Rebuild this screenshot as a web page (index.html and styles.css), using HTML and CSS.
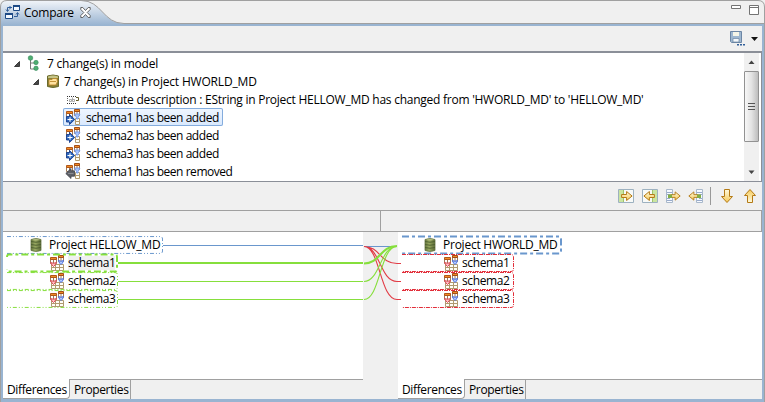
FILE: index.html
```html
<!DOCTYPE html>
<html lang="en">
<head>
<meta charset="utf-8">
<title>Compare</title>
<link rel="stylesheet" href="styles.css">
</head>
<body>
<svg class="defs" aria-hidden="true">
  <defs>
    <linearGradient id="gold" x2="0" y2="1"><stop stop-color="#fffbe0"/><stop offset="1" stop-color="#f5c957"/></linearGradient>
    <linearGradient id="tabfill" gradientUnits="userSpaceOnUse" x1="0" y1="0" x2="0" y2="25"><stop stop-color="#f3f6fa"/><stop offset="1" stop-color="#99b4d1"/></linearGradient>
    <linearGradient id="olive"><stop stop-color="#66763f"/><stop offset=".4" stop-color="#9aab62"/><stop offset="1" stop-color="#5c6b38"/></linearGradient>
    <symbol id="expand" viewBox="0 0 6 6"><path d="M5.500 .5v5h-5z" fill="#484848" stroke="#222" stroke-width=".8"/></symbol>
    <symbol id="model" viewBox="0 0 16 16"><path d="M4.500 3v11H9M4.500 8H9" fill="none" stroke="#777"/><circle cx="4.500" cy="3" r="2.300" fill="#4faf72" stroke="#34885a" stroke-width=".6"/><circle cx="10" cy="7.500" r="2.200" fill="#4faf72" stroke="#34885a" stroke-width=".6"/><circle cx="10" cy="13.300" r="2.200" fill="#4faf72" stroke="#34885a" stroke-width=".6"/></symbol>
    <symbol id="project" viewBox="0 0 16 16"><path d="M2.500 3Q8 1 13.500 3v10.500Q8 15.500 2.500 13.500z" fill="#87813a" stroke="#6b6a2c"/><path d="M3 3.500q5-2 10 0V5H3z" fill="#c5c487"/><path d="M4 12V6.500h3l1-1h4v2h1l-2 4.500z" fill="#ffe2a0" stroke="#b88222" stroke-width=".8"/><path d="M5 8.500h6" stroke="#b88222" stroke-width=".8"/></symbol>
    <symbol id="db" viewBox="0 0 16 16"><path d="M3 2.500Q8 .5 13 2.500v11Q8 15.500 3 13.500z" fill="url(#olive)" stroke="#647441" stroke-width=".8"/><path d="M3 4.500q5 1.500 10 0M3 7.500q5 1.500 10 0M3 10.500q5 1.500 10 0" fill="none" stroke="#4b5c2e" stroke-width=".9"/><path d="M4 2.800q4-1.400 8 0-4 1.200-8 0" fill="#b3bd83"/></symbol>
    <symbol id="attr" viewBox="0 0 16 16"><path d="M2 5.500h10M2 12.500h10" stroke="#333" stroke-dasharray="1 1"/><path d="M2.500 7v4" stroke="#666" stroke-dasharray="1 1"/><path d="M4.500 8.500h2v2h-2zM7.500 6.500v4h2v-2h-2" fill="none" stroke="#999" stroke-width=".8"/><path d="M11 6.500h2.500v3H11" fill="none" stroke="#665d2c"/></symbol>
    <symbol id="tables" viewBox="0 0 16 16"><path d="M1.500 3.500h6v5h-6zM4.500 4v4" fill="#fff" stroke="#a07a58"/><path d="M1.500 2.500h6v2h-6z" fill="#f08c24" stroke="#b0561a"/><path d="M9.500 1.500h5v5h-5zM12 3v3" fill="#fff" stroke="#a07a58"/><path d="M9.500 .5h5v2h-5z" fill="#f08c24" stroke="#a34d18"/></symbol>
    <symbol id="schema" viewBox="0 0 16 16"><path d="M2.500 9.500h12v6h-12zM6.500 10v5M10.500 10v5M3 12.500h11" fill="#fffef6" stroke="#b09a70"/><use href="#tables"/><path d="M1.500 7.500q3 1.500 6 0L6 10l-1.500 1.500L3 10z" fill="#ffc4c8" stroke="#d93c48" stroke-width=".9"/><path d="M9.500 5.500q2.500 1.500 5 0L13.500 8 12 9.500 10.500 8z" fill="#b5cbff" stroke="#3e67e0" stroke-width=".9"/></symbol>
    <symbol id="action" viewBox="0 0 16 16"><path d="M10.500 9.500h4v6h-4zM11 12.500h3" fill="#fffef6" stroke="#b09a70"/><use href="#tables"/><path d="M9.500 5h5.500l-2 3.500v1.500h-1.500V8.500z" fill="#a8c6ff" stroke="#6a92e8" stroke-width=".8"/></symbol>
    <symbol id="added" viewBox="0 0 16 16"><use href="#action"/><path d="M1.500 7.500h3V5.500L9.700 10.500l-5.200 5v-2.500h-3z" fill="#2c66bd" stroke="#153c8c" stroke-width=".9"/><path d="M2.500 10.500h5M5 8.200v4.600" stroke="#fff" stroke-width="1.100"/></symbol>
    <symbol id="removed" viewBox="0 0 16 16"><use href="#action"/><path d="M9.500 7.800H6V5.500L.8 10.500l5.200 5v-2.300h3.500z" fill="#5d6068" stroke="#3e4046" stroke-width=".8"/><path d="M3 10.500h5.500" stroke="#8a8c92"/></symbol>
    <symbol id="arrow" viewBox="0 0 12 10"><path d="M.6 3.500h5v-3l5.500 4.500-5.500 4.500v-3h-5z" fill="url(#gold)" stroke="#b47a16"/></symbol>
    <symbol id="copyall" viewBox="0 0 16 16"><path d="M.5 1.500h15v13H.5z" fill="#f8faf8" stroke="#9db1c0"/><path d="M1 2h4v12H1z" fill="#cbe5a0"/><path d="M5.500 2v12" stroke="#9fc36c"/><use href="#arrow" x="3" y="3" width="12" height="10"/></symbol>
    <symbol id="copyone" viewBox="0 0 16 16"><path d="M1.500 1.500h6v13h-6z" fill="#f7faff" stroke="#a8b8cb"/><path d="M2 4.500h5M2 6.500h3M2 10.500h3M2 12.500h5" stroke="#9aaccc"/><use href="#arrow" x="5" y="3" width="11" height="10"/><path d="M3 6.500h4v3.500H3z" fill="#82ad43"/></symbol>
    <symbol id="down" viewBox="0 0 14 16"><path d="M4.500 1.500h5v7h3L7 14.500 1.500 8.500h3z" fill="url(#gold)" stroke="#b47a16"/></symbol>
  </defs>
</svg>
<main class="window">
  <header class="titlebar">
    <svg class="tabshape" viewBox="0 0 765 26">
      <path d="M0 0h765v26H0z" fill="#f0f0f0"/>
      <path d="M.5 26V7Q.5 .5 7 .5H81C102 .5 103 23.500 124 23.500H765V26z" fill="url(#tabfill)"/>
      <path d="M124 24h641v2H124z" fill="#99b4d1"/>
      <path d="M.5 26V7Q.5 .5 7 .5H758Q764.500 .5 764.500 7v19M81 .5C102 .5 103 23.500 124 23.500H765" fill="none" stroke="#a0a0a0"/>
    </svg>
    <svg class="compare-icon" viewBox="0 0 16 16"><path d="M8.500 1.500h6v5h-6zM.5 9.500h7v5h-7z" fill="#f4f9ff" stroke="#1d4a86"/><path d="M8 2h7M0 10h8" stroke="#1d4a86" stroke-width="2"/><path d="M7 3.500H2.500V7M1 5.500l1.500 2L4 5.500M9 12.500h3.500V9M11 10.500l1.500-2 1.500 2M5 2v3" fill="none" stroke="#315e99"/></svg>
    <span class="tabtitle">Compare</span>
    <svg class="close" viewBox="0 0 11 11"><path d="M.8 .5h2l2.700 3 2.700-3h2v2l-3 3 3 3v2h-2l-2.700-3-2.700 3h-2v-2l3-3-3-3z" fill="#fff" stroke="#555" stroke-width=".9"/></svg>
    <svg class="winctl" viewBox="0 0 30 12"><path d="M.5 1.500h9v3h-9zM18.500 1.500h9v9h-9zM18 3.500h10" fill="#fff" stroke="#737373"/></svg>
  </header>
  <section class="body">
    <div class="toolbar top">
      <svg class="save" viewBox="0 0 16 16"><path d="M.5 1.500h11v11H1.500l-1-1z" fill="#9eb7d0" stroke="#6c86a5"/><path d="M3 2h6v4H3z" fill="#f5f5e8"/><path d="M3 8.500h6V12H3z" fill="#f4f8fb" stroke="#6c86a5" stroke-width=".7"/><path d="M7 14.800h8" stroke="#315f9a" stroke-width="1.500" stroke-dasharray="2 1"/></svg>
      <svg class="menu" viewBox="0 0 7 4"><path d="M0 0h7L3.500 4z" fill="#111"/></svg>
    </div>
    <div class="tree">
      <div class="rows">
        <div class="row l0"><svg class="tw"><use href="#expand"/></svg><svg class="ic"><use href="#model"/></svg><span class="t1">7 change(s) in model</span></div>
        <div class="row l1"><svg class="tw"><use href="#expand"/></svg><svg class="ic"><use href="#project"/></svg><span class="t2">7 change(s) in Project HWORLD_MD</span></div>
        <div class="row l2"><svg class="ic"><use href="#attr"/></svg><span class="t3">Attribute description : EString in Project HELLOW_MD has changed from 'HWORLD_MD' to 'HELLOW_MD'</span></div>
        <div class="row l2 selected"><svg class="ic"><use href="#added"/></svg><span class="t4">schema1 has been added</span></div>
        <div class="row l2"><svg class="ic"><use href="#added"/></svg><span class="t4">schema2 has been added</span></div>
        <div class="row l2"><svg class="ic"><use href="#added"/></svg><span class="t4">schema3 has been added</span></div>
        <div class="row l2"><svg class="ic"><use href="#removed"/></svg><span class="t4">schema1 has been removed</span></div>
      </div>
      <div class="scrollbar">
        <svg class="sb" viewBox="0 0 15 18"><path d="M4.500 11h6L7.500 7.500z" fill="#444"/></svg>
        <div class="thumb"><i></i><i></i><i></i></div>
        <svg class="sb end" viewBox="0 0 15 18"><path d="M4.500 7.500h6l-3 3.500z" fill="#444"/></svg>
      </div>
    </div>
    <div class="toolbar mid">
      <svg><use href="#copyall"/></svg>
      <svg class="flip"><use href="#copyall"/></svg>
      <svg><use href="#copyone"/></svg>
      <svg class="flip"><use href="#copyone"/></svg>
      <i class="sep"></i>
      <svg class="nav"><use href="#down"/></svg>
      <svg class="nav up"><use href="#down"/></svg>
    </div>
    <div class="heads"><div></div><div></div></div>
    <div class="compare">
      <section class="pane left">
        <div class="list">
          <div class="node"><div class="box root"><svg class="edge" viewBox="0 0 157 18"><path d="M0 .5H154Q156.500 .5 156.500 3V15Q156.500 17.500 154 17.500H0"/></svg><svg class="ic"><use href="#db"/></svg><span>Project HELLOW_MD</span></div><i class="wire blue"></i></div>
          <div class="node"><div class="box child add current"><svg class="edge" viewBox="0 0 112 18"><path d="M0 3Q0 .5 2 .5H109Q111 .5 111 3V15Q111 17.500 109 17.500H2Q0 17.500 0 15"/></svg><svg class="ic"><use href="#schema"/></svg><span>schema1</span></div><i class="wire green thick"></i></div>
          <div class="node"><div class="box child add"><svg class="edge" viewBox="0 0 112 18"><path d="M0 .5H109Q111.500 .5 111.500 3V15Q111.500 17.500 109 17.500H0"/></svg><svg class="ic"><use href="#schema"/></svg><span>schema2</span></div><i class="wire green"></i></div>
          <div class="node"><div class="box child add"><svg class="edge" viewBox="0 0 112 18"><path d="M0 .5H109Q111.500 .5 111.500 3V15Q111.500 17.500 109 17.500H0"/></svg><svg class="ic"><use href="#schema"/></svg><span>schema3</span></div><i class="wire green"></i></div>
        </div>
        <nav class="tabs"><span class="tab active">Differences</span><span class="tab">Properties</span></nav>
      </section>
      <svg class="links" viewBox="0 0 35 167" fill="none">
        <path d="M1 14.500H34" stroke="#6a97cd"/>
        <g stroke="#e23b45" stroke-width="1.100"><path d="M1 14.500C17 14.500 17 31.500 34 31.500H38M1 14.500C17 14.500 17 49.500 34 49.500H38M1 14.500C17 14.500 17 67.500 34 67.500H38"/></g>
        <g stroke="#86df3c" stroke-width="1.100"><path d="M1 49.500C17 49.500 17 14.500 34 14.500M1 67.500C17 67.500 17 14.500 34 14.500"/><path d="M1 31.500C17 31.500 17 14 34 14" stroke-width="2.200"/></g>
      </svg>
      <section class="pane right">
        <div class="list">
          <div class="node"><div class="box root current"><svg class="edge" viewBox="0 0 160 18"><path d="M0 .5H157Q159 .5 159 3V15Q159 17.500 157 17.500H0"/></svg><svg class="ic"><use href="#db"/></svg><span>Project HWORLD_MD</span></div></div>
          <div class="node"><div class="box child del"><svg class="edge" viewBox="0 0 112 18"><path d="M0 .5H109Q111.500 .5 111.500 3V15Q111.500 17.500 109 17.500H0"/></svg><svg class="ic"><use href="#schema"/></svg><span>schema1</span></div></div>
          <div class="node"><div class="box child del"><svg class="edge" viewBox="0 0 112 18"><path d="M0 .5H109Q111.500 .5 111.500 3V15Q111.500 17.500 109 17.500H0"/></svg><svg class="ic"><use href="#schema"/></svg><span>schema2</span></div></div>
          <div class="node"><div class="box child del"><svg class="edge" viewBox="0 0 112 18"><path d="M0 .5H109Q111.500 .5 111.500 3V15Q111.500 17.500 109 17.500H0"/></svg><svg class="ic"><use href="#schema"/></svg><span>schema3</span></div></div>
        </div>
        <nav class="tabs"><span class="tab active">Differences</span><span class="tab">Properties</span></nav>
      </section>
    </div>
  </section>
</main>
</body>
</html>
```
FILE: styles.css
```css
* { box-sizing: border-box; }
body { margin: 0; font: 12px/18px "Open Sans", "Noto Sans", sans-serif; letter-spacing: -.3px; color: #000; overflow: hidden; }
svg { display: block; flex: none; }
.defs { position: absolute; width: 0; height: 0; }
.window { width: 765px; height: 402px; background: #99b4d1; display: flex; flex-direction: column; border-left: 1px solid #a0a0a0; border-right: 1px solid #a0a0a0; }
.titlebar { height: 26px; display: flex; align-items: center; position: relative; padding: 0 3px 0 4px; flex: none; }
.tabshape { position: absolute; left: -1px; top: 0; width: 765px; height: 26px; }
.titlebar > :not(.tabshape) { position: relative; }
.compare-icon { width: 16px; height: 16px; margin-top: -2px; }
.tabtitle { margin-left: 3px; width: 56px; letter-spacing: -.25px; }
.close { width: 11px; height: 11px; margin-top: -1px; }
.winctl { width: 30px; height: 12px; margin-left: auto; margin-top: -6px; }
.body { margin: 0 2px 3px; flex: 1; display: flex; flex-direction: column; background: #f0f0f0; }
.toolbar { display: flex; align-items: center; justify-content: flex-end; }
.top { height: 25px; padding-right: 4px; }
.save { width: 16px; height: 16px; margin-top: -1px; }
.menu { width: 7px; height: 4px; margin-left: 5px; }
.tree { height: 131px; border: 1px solid #8b8f98; border-width: 2px 1px 1px 0; background: #fff; display: flex; overflow: hidden; }
.rows { flex: 1; padding-top: 1px; }
.row { height: 18px; display: flex; align-items: center; white-space: nowrap; width: max-content; padding-right: 4px; }
.row span { position: relative; top: .5px; }
.l0 { margin-left: 11px; }
.l1 { margin-left: 30px; }
.l2 { margin-left: 60px; }
.tw { width: 6px; height: 6px; margin: 2px 5px 0 0; }
.ic { width: 16px; height: 16px; }
.row .ic { margin-right: 5px; margin-left: 1px; }
.row.l0 .ic { margin-right: 5px; }
.l1 .ic { margin-right: 3px; }
.l2 .ic { margin-left: 2px; }
.t1 { letter-spacing: -.21px; }
.t2 { letter-spacing: -.18px; }
.t3 { letter-spacing: -.25px; }
.t4 { letter-spacing: -.46px; }
.l2.selected { width: 160px; background: linear-gradient(#f0f6ff, #d8e8fd); box-shadow: 0 0 0 1px #84acdd inset; border-radius: 2px; }
.scrollbar { width: 15px; background: #f0f0f0; display: flex; flex-direction: column; margin-right: 2px; }
.sb { width: 15px; height: 18px; }
.thumb { height: 71px; border: 1px solid #929292; border-radius: 1px; background: linear-gradient(90deg, #f7f7f7, #e3e3e3 50%, #bdbdbd); display: flex; flex-direction: column; align-items: center; justify-content: center; gap: 2px; }
.thumb i { width: 7px; height: 1px; background: #555; }
.end { margin-top: auto; }
.mid { height: 28px; padding-right: 5px; }
.mid svg { width: 16px; height: 16px; margin-left: 7px; }
.mid svg:first-child { margin-right: 1px; }
.mid .sep { width: 1px; height: 18px; background: #999; margin: 0 3px 0 6px; }
.mid .nav { width: 14px; margin-left: 6px; }
.mid .nav + .nav { margin-left: 9px; }
.flip { transform: scaleX(-1); }
.up { transform: scaleY(-1); }
.heads { height: 22px; display: flex; border: 1px solid #a0a0a0; border-left: 0; }
.heads div { width: 378px; border-right: 1px solid #a0a0a0; }
.heads div + div { flex: 1; border: 0; }
.compare { flex: 1; display: flex; }
.pane { display: flex; flex-direction: column; }
.left { width: 360px; }
.right { flex: 1; }
.list { height: 148px; background: #fff; padding: 4px 0 0 4px; border-bottom: 1px solid #a0a0a0; }
.node { height: 18px; display: flex; align-items: center; }
.box { height: 18px; display: flex; align-items: center; white-space: nowrap; position: relative; }
.box span { position: relative; top: -.5px; }
.edge { position: absolute; left: 0; top: 0; width: 100%; height: 18px; overflow: visible; fill: none; stroke: #6a97cd; stroke-width: 1; stroke-dasharray: 4 2 1 2 1 2; }
.root { width: 156px; padding-left: 21px; }
.root .ic { margin-right: 5px; }
.root span { letter-spacing: -.24px; }
.right .root { width: 160px; padding-left: 20px; }
.current .edge { stroke-width: 2; stroke-dasharray: 7 3 3 3; }
.child { width: 111px; padding-left: 42px; }
.right .child { width: 112px; padding-left: 41px; }
.child .ic { margin-right: 3px; }
.child span { letter-spacing: -.4px; }
.add .edge { stroke: #86df3c; }
.del .edge { stroke: #e22e3a; stroke-dasharray: 4 1 1 1; }
.add.current span { background: #f0f0f0; line-height: 14px; }
.wire { flex: 1; height: 1px; }
.blue { background: #6a97cd; }
.green { background: #86df3c; }
.thick { height: 2px; }
.links { width: 35px; height: 167px; overflow: visible; position: relative; }
.tabs { height: 19px; display: flex; letter-spacing: -.36px; }
.tab { width: 61px; padding-left: 4px; border-right: 1px solid #a0a0a0; line-height: 19px; height: 19px; white-space: nowrap; }
.active { width: 67px; background: #fff; margin-top: -1px; height: 20px; line-height: 21px; border-bottom: 1px solid #a0a0a0; border-radius: 0 0 4px 0; }
```
